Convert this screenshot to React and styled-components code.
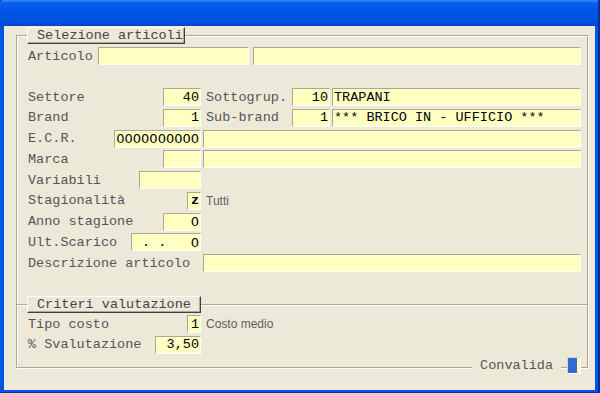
import React from 'react';
import styled, { createGlobalStyle } from 'styled-components';

const MONO = `"Liberation Mono", "Courier New", monospace`;
const SANS = `"Liberation Sans", Arial, sans-serif`;
const DEJAVU = `"DejaVu Sans", Verdana, sans-serif`;

const Global = createGlobalStyle`
  html, body { margin: 0; padding: 0; background: #000; }
  body { width: 600px; height: 393px; overflow: hidden; }
`;

const Window = styled.div`
  width: 600px;
  height: 393px;
  box-sizing: border-box;
  display: flex;
  flex-direction: column;
  background: #0A2AA0;
  padding: 0 2px 1px 0;
`;

const TitleBar = styled.div`
  height: 26px;
  flex: none;
  border-top-left-radius: 3px;
  background: linear-gradient(
    to bottom,
    #3D8BF7 0px,
    #0A5DEB 3px,
    #0057E8 40%,
    #0051E0 85%,
    #0042CC 100%
  );
`;

const Client = styled.div`
  flex: 1;
  min-height: 0;
  display: flex;
  flex-direction: column;
  background: #ECE9D8;
  border-style: solid;
  border-color: #0055E5;
  border-width: 0 3px 2px 4px;
`;

const Group = styled.div`
  display: flex;
  flex-direction: column;
  margin: ${(p) => (p.$first ? '9px' : '-1px')} 7px 0 12px;
  border: 1px solid #ACA899;
  box-shadow: inset 1px 1px 0 #fff, 1px 1px 0 #fff;
  padding: 0 6px ${(p) => p.$pb}px 11px;
`;

const GroupTitle = styled.div`
  align-self: flex-start;
  box-sizing: border-box;
  height: 17px;
  width: ${(p) => p.$w}px;
  margin: -9px 0 0 -1px;
  padding-left: 9px;
  background: #ECE9D8;
  border: 1px solid;
  border-color: #fff #404040 #404040 #fff;
  box-shadow: inset -1px -1px 0 #ACA899;
  font-family: ${MONO};
  font-size: 13.5px;
  line-height: 15px;
  color: #444;
  white-space: nowrap;
`;

const Stack = styled.div`
  display: flex;
  flex-direction: column;
  gap: 2.75px;
  margin-top: ${(p) => p.$mt}px;
`;

const Row = styled.div`
  display: flex;
  align-items: center;
  height: 18px;
  margin-top: ${(p) => p.$mt || 0}px;
`;

const LeftCell = styled.div`
  display: flex;
  align-items: center;
  width: 173px;
  flex: none;
  margin-right: 2px;
`;

const RightCell = styled.div`
  display: flex;
  align-items: center;
  flex: 1;
  min-width: 0;
  gap: 2px;
`;

const Label = styled.span`
  box-sizing: border-box;
  flex: none;
  width: ${(p) => (p.$w ? `${p.$w}px` : 'auto')};
  padding-left: ${(p) => p.$pl || 0}px;
  font-family: ${MONO};
  font-size: 13.5px;
  color: #555;
  white-space: pre;
`;

const Note = styled.span`
  padding-left: 3px;
  font-family: ${SANS};
  font-size: 12px;
  color: #5f5f5f;
  white-space: nowrap;
`;

const Field = styled.div`
  box-sizing: border-box;
  height: 18px;
  width: ${(p) => (p.$w ? `${p.$w}px` : 'auto')};
  flex: ${(p) => (p.$w ? 'none' : '1')};
  margin-left: ${(p) => (p.$push ? 'auto' : `${p.$ml || 0}px`)};
  display: flex;
  align-items: center;
  justify-content: ${(p) =>
    p.$align === 'right' ? 'flex-end' : p.$align === 'between' ? 'space-between' : 'flex-start'};
  padding: 0 1px 0 ${(p) => p.$padl ?? 1}px;
  background: #FFFFC2;
  border: 1px solid;
  border-color: #ACA899 #fff #fff #ACA899;
  font-family: ${(p) => (p.$sans ? DEJAVU : MONO)};
  font-size: ${(p) => (p.$sans ? 13 : 13.5)}px;
  font-weight: ${(p) => (p.$bold ? 700 : 400)};
  color: #000;
  white-space: pre;
  overflow: hidden;
`;

const SansNum = styled.span`
  font-family: ${DEJAVU};
  font-size: 13px;
`;

const Footer = styled.div`
  display: flex;
  justify-content: flex-end;
  align-items: center;
  height: 17px;
  margin: 3.25px 0 -7px;
`;

const FooterLabel = styled.span`
  background: #ECE9D8;
  padding: 0 8px;
  font-family: ${MONO};
  font-size: 13.5px;
  line-height: 17px;
  color: #555;
`;

const Check = styled.div`
  box-sizing: border-box;
  width: 14px;
  height: 17px;
  margin-left: 6px;
  border: 1px solid;
  border-color: #D8D5C6 #fff #fff #D8D5C6;
  background: linear-gradient(to right, #2F6BD0 0, #2F6BD0 9px, #FFF6C4 9px);
`;

const Left = ({ label, children }) => (
  <LeftCell>
    <Label>{label}</Label>
    {children}
  </LeftCell>
);

export default function App() {
  return (
    <>
      <Global />
      <Window>
        <TitleBar />
        <Client>
          <Group $first $pb={32}>
            <GroupTitle $w={158}>Selezione articoli</GroupTitle>
            <Row $mt={3}>
              <Label $w={70}>Articolo</Label>
              <Field $w={151} />
              <Field $ml={4} />
            </Row>
            <Stack $mt={23}>
              <Row>
                <Left label="Settore">
                  <Field $w={38} $push $align="right">40</Field>
                </Left>
                <RightCell>
                  <Label $w={87} $pl={3}>Sottogrup.</Label>
                  <Field $w={38} $align="right">10</Field>
                  <Field>TRAPANI</Field>
                </RightCell>
              </Row>
              <Row>
                <Left label="Brand">
                  <Field $w={38} $push $align="right">1</Field>
                </Left>
                <RightCell>
                  <Label $w={87} $pl={3}>Sub-brand</Label>
                  <Field $w={38} $align="right">1</Field>
                  <Field>*** BRICO IN - UFFICIO ***</Field>
                </RightCell>
              </Row>
              <Row>
                <Left label="E.C.R.">
                  <Field $w={87} $push $sans $align="right">0000000000</Field>
                </Left>
                <RightCell>
                  <Field />
                </RightCell>
              </Row>
              <Row>
                <Left label="Marca">
                  <Field $w={38} $push />
                </Left>
                <RightCell>
                  <Field />
                </RightCell>
              </Row>
              <Row>
                <Left label="Variabili">
                  <Field $w={62} $push />
                </Left>
              </Row>
              <Row>
                <Left label="Stagionalità">
                  <Field $w={14} $push $bold $align="right">z</Field>
                </Left>
                <RightCell>
                  <Note>Tutti</Note>
                </RightCell>
              </Row>
              <Row>
                <Left label="Anno stagione">
                  <Field $w={38} $push $sans $align="right">0</Field>
                </Left>
              </Row>
              <Row>
                <Left label="Ult.Scarico">
                  <Field $w={70} $push $align="between" $padl={2}>
                    <span>{' . .'}</span>
                    <SansNum>0</SansNum>
                  </Field>
                </Left>
              </Row>
              <Row>
                <Left label="Descrizione articolo" />
                <RightCell>
                  <Field />
                </RightCell>
              </Row>
            </Stack>
          </Group>

          <Group $pb={0}>
            <GroupTitle $w={174}>Criteri valutazione</GroupTitle>
            <Stack $mt={2}>
              <Row>
                <Left label="Tipo costo">
                  <Field $w={14} $push $align="right">1</Field>
                </Left>
                <RightCell>
                  <Note>Costo medio</Note>
                </RightCell>
              </Row>
              <Row>
                <Left label="% Svalutazione">
                  <Field $w={46} $push $align="right">3,50</Field>
                </Left>
              </Row>
            </Stack>
            <Footer>
              <FooterLabel>Convalida</FooterLabel>
              <Check />
            </Footer>
          </Group>
        </Client>
      </Window>
    </>
  );
}
